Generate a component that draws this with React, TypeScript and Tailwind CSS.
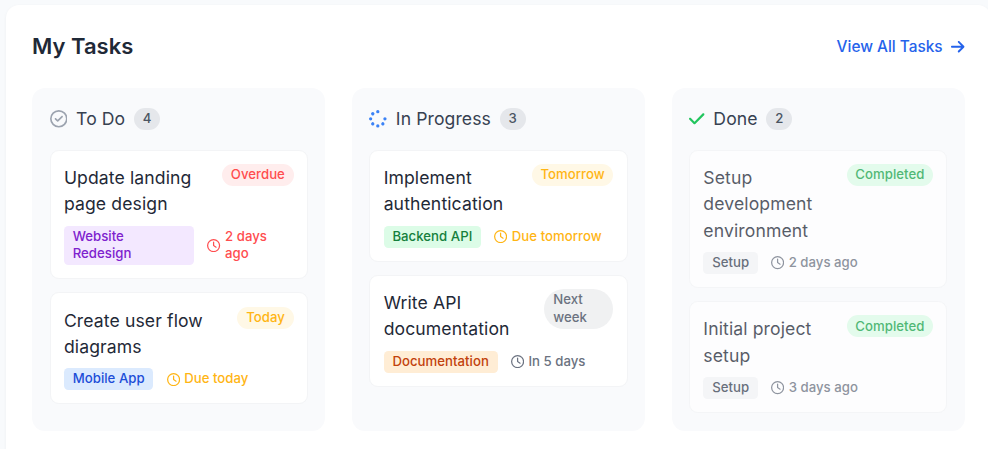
import type { ReactNode } from "react";
import { FaArrowRight, FaCheck, FaRegCircleCheck, FaRegClock, FaSpinner } from "react-icons/fa6";

type Task = {
  title: string;
  badge: string;
  badgeClass: string;
  tag: string;
  tagClass: string;
  due: string;
  dueClass: string;
};

const danger = "text-[#ff4d4f]";
const warning = "text-[#ffb514]";

const todo: Task[] = [
  {
    title: "Update landing page design",
    badge: "Overdue",
    badgeClass: "bg-[#ffeded] text-[#ff4d4f]",
    tag: "Website Redesign",
    tagClass: "bg-[#f3e8ff] text-[#7e22ce]",
    due: "2 days ago",
    dueClass: danger,
  },
  {
    title: "Create user flow diagrams",
    badge: "Today",
    badgeClass: "bg-[#fff8e6] text-[#ffb514]",
    tag: "Mobile App",
    tagClass: "bg-[#dbeafe] text-[#1d4ed8]",
    due: "Due today",
    dueClass: warning,
  },
];

const progress: Task[] = [
  {
    title: "Implement authentication",
    badge: "Tomorrow",
    badgeClass: "bg-[#fff8e6] text-[#ffb514]",
    tag: "Backend API",
    tagClass: "bg-[#dcfce7] text-[#15803d]",
    due: "Due tomorrow",
    dueClass: warning,
  },
  {
    title: "Write API documentation",
    badge: "Next week",
    badgeClass: "bg-[#f0f1f2] text-[#6b7280]",
    tag: "Documentation",
    tagClass: "bg-[#ffedd5] text-[#c2410c]",
    due: "In 5 days",
    dueClass: "text-[#6b7280]",
  },
];

const done: Task[] = [
  {
    title: "Setup development environment",
    badge: "Completed",
    badgeClass: "bg-[#dcfce7] text-[#16a34a]",
    tag: "Setup",
    tagClass: "bg-[#f3f4f6] text-[#374151]",
    due: "2 days ago",
    dueClass: "text-[#6b7280]",
  },
  {
    title: "Initial project setup",
    badge: "Completed",
    badgeClass: "bg-[#dcfce7] text-[#16a34a]",
    tag: "Setup",
    tagClass: "bg-[#f3f4f6] text-[#374151]",
    due: "3 days ago",
    dueClass: "text-[#6b7280]",
  },
];

function TaskCard({ task, faded }: { task: Task; faded?: boolean }) {
  return (
    <div className={`rounded-lg border border-[#f3f4f6] bg-white p-3 ${faded ? "opacity-75" : ""}`}>
      <div className="mb-2 flex items-start justify-between">
        <h4 className="-mb-[0.8px] pt-[0.8px] text-base font-normal tracking-[0.1px] text-[#1f2937]">{task.title}</h4>
        <span className={`rounded-full px-2 py-0.5 text-xs ${task.badgeClass}`}>{task.badge}</span>
      </div>
      <div className="flex items-center text-xs">
        <span className={`mr-3 rounded px-2 py-0.5 ${task.tagClass}`}>{task.tag}</span>
        <span className={`flex items-center ${task.dueClass}`}>
          <FaRegClock className="mr-1 shrink-0" />
          <span>{task.due}</span>
        </span>
      </div>
    </div>
  );
}

function Column({ icon, title, count, tasks, faded }: { icon: ReactNode; title: string; count: number; tasks: Task[]; faded?: boolean }) {
  return (
    <section className="rounded-xl bg-[#f9fafc] p-4">
      <div className="mb-4 flex items-center">
        {icon}
        <h3 className="text-base font-normal tracking-[0.08px] text-[#374151]">{title}</h3>
        <span className="ml-2 rounded-full bg-[#e5e7eb] px-2 py-0.5 text-xs text-[#4b5563]">{count}</span>
      </div>
      <div className="flex flex-col gap-3">
        {tasks.map((task) => (
          <TaskCard key={task.title} task={task} faded={faded} />
        ))}
      </div>
    </section>
  );
}

export default function App() {
  return (
    <div className="h-[449px] w-full overflow-hidden bg-[#f8fafc] font-['Inter',sans-serif]">
      <div className="pt-[4.2px] pl-[5.2px] [zoom:1.1]">
        <main className="h-[440px] w-[896px] rounded-xl bg-white p-6 font-medium tracking-[0.02px] shadow-[0_1px_3px_rgba(0,0,0,0.05)]">
          <header className="mb-6 flex items-center justify-between">
            <h2 className="text-xl font-semibold tracking-normal text-[#1f2937]">My Tasks</h2>
            <a className="flex items-center pt-[0.9px] text-sm font-medium tracking-normal text-[#2563eb]">
              View All Tasks
              <FaArrowRight className="ml-2 h-3.5 w-[12.25px]" />
            </a>
          </header>
          <div className="grid grid-cols-3 gap-6">
            <Column icon={<FaRegCircleCheck className="mr-2 text-[#9ca3af]" />} title="To Do" count={4} tasks={todo} />
            <Column icon={<FaSpinner className="mr-2 text-[#3b82f6]" />} title="In Progress" count={3} tasks={progress} />
            <Column icon={<FaCheck className="mr-2 h-4 w-3.5 text-[#22c55e]" />} title="Done" count={2} tasks={done} faded />
          </div>
        </main>
      </div>
    </div>
  );
}
